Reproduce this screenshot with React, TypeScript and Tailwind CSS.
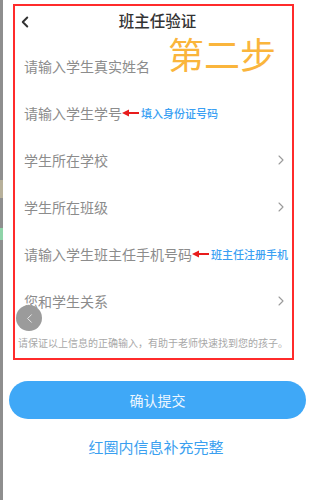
import { ChevronLeft, ChevronRight } from "lucide-react";

const rows = [
  { label: "请输入学生真实姓名" },
  { label: "请输入学生学号", note: "填入身份证号码" },
  { label: "学生所在学校", arrow: true },
  { label: "学生所在班级", arrow: true },
  { label: "请输入学生班主任手机号码", note: "班主任注册手机" },
  { label: "您和学生关系", arrow: true },
];

function RedArrow() {
  return (
    <svg width="17" height="8" viewBox="0 0 17 8" className="shrink-0">
      <polygon points="0,4 7,0.5 7,7.5" fill="#e81c1c" />
      <rect x="6" y="3" width="11" height="2" fill="#e81c1c" />
    </svg>
  );
}

export default function App() {
  return (
    <div
      className="w-[314px] h-[500px] bg-white flex overflow-hidden"
      style={{ fontFamily: '"Noto Sans CJK SC", "Noto Sans", sans-serif' }}
    >
      {/* left edge strip */}
      <div className="w-[3px] h-full bg-[#8e8e8e] flex flex-col">
        <div className="h-[180px]"></div>
        <div className="h-[18px] bg-[#b7b09a]"></div>
        <div className="h-[30px]"></div>
        <div className="h-[12px] bg-[#8fd3a8]"></div>
      </div>

      <div className="flex-1 flex flex-col">
        {/* red annotated box */}
        <div className="relative ml-[10px] mt-[4px] w-[281px] h-[356px] border-2 border-[#ff2b2b] flex flex-col">
          <div className="h-[36px] pt-[4px] flex items-start relative">
            <ChevronLeft size={18} strokeWidth={2.6} className="text-[#333] absolute left-[1px] top-[7px]" />
            <div className="w-full text-center pl-[8px] text-[15.5px] leading-[20px] font-medium text-[#333]">
              班主任验证
            </div>
          </div>

          <div className="absolute left-[153px] top-[29px] text-[36px] leading-[36px] text-[#fab53c]">
            第二步
          </div>

          {rows.map((row, i) => (
            <div key={i} className="h-[47px] flex items-center pl-[9px] pr-[3px]">
              <span className="text-[14px] leading-[20px] text-[#8c8c8c] whitespace-nowrap">{row.label}</span>
              {row.note && (
                <div className="flex items-center">
                  <RedArrow />
                  <span className="ml-[2px] text-[11px] leading-[16px] font-medium text-[#3a9ff3] whitespace-nowrap">
                    {row.note}
                  </span>
                </div>
              )}
              {row.arrow && (
                <ChevronRight size={16} strokeWidth={1.6} className="ml-auto text-[#9a9a9a]" />
              )}
            </div>
          ))}

          <div className="absolute left-[1px] top-[299px] w-[26px] h-[26px] rounded-full bg-[#9b9b9b] flex items-center justify-center">
            <ChevronLeft size={15} strokeWidth={1.6} className="text-[#e8e8e8]" />
          </div>

          <div className="mt-[12px] pl-[3px] text-[10px] leading-[14px] text-[#a8a8a8] whitespace-nowrap">
            请保证以上信息的正确输入，有助于老师快速找到您的孩子。
          </div>
        </div>

        <button className="ml-[6px] mt-[21px] w-[297px] h-[38px] rounded-full bg-[#3fa8f7] text-[14px] text-[#eef7ff]">
          确认提交
        </button>

        <div className="mt-[17px] pr-[5px] text-center text-[15px] leading-[22px] text-[#3a9ff0]">
          红圈内信息补充完整
        </div>
      </div>
    </div>
  );
}
